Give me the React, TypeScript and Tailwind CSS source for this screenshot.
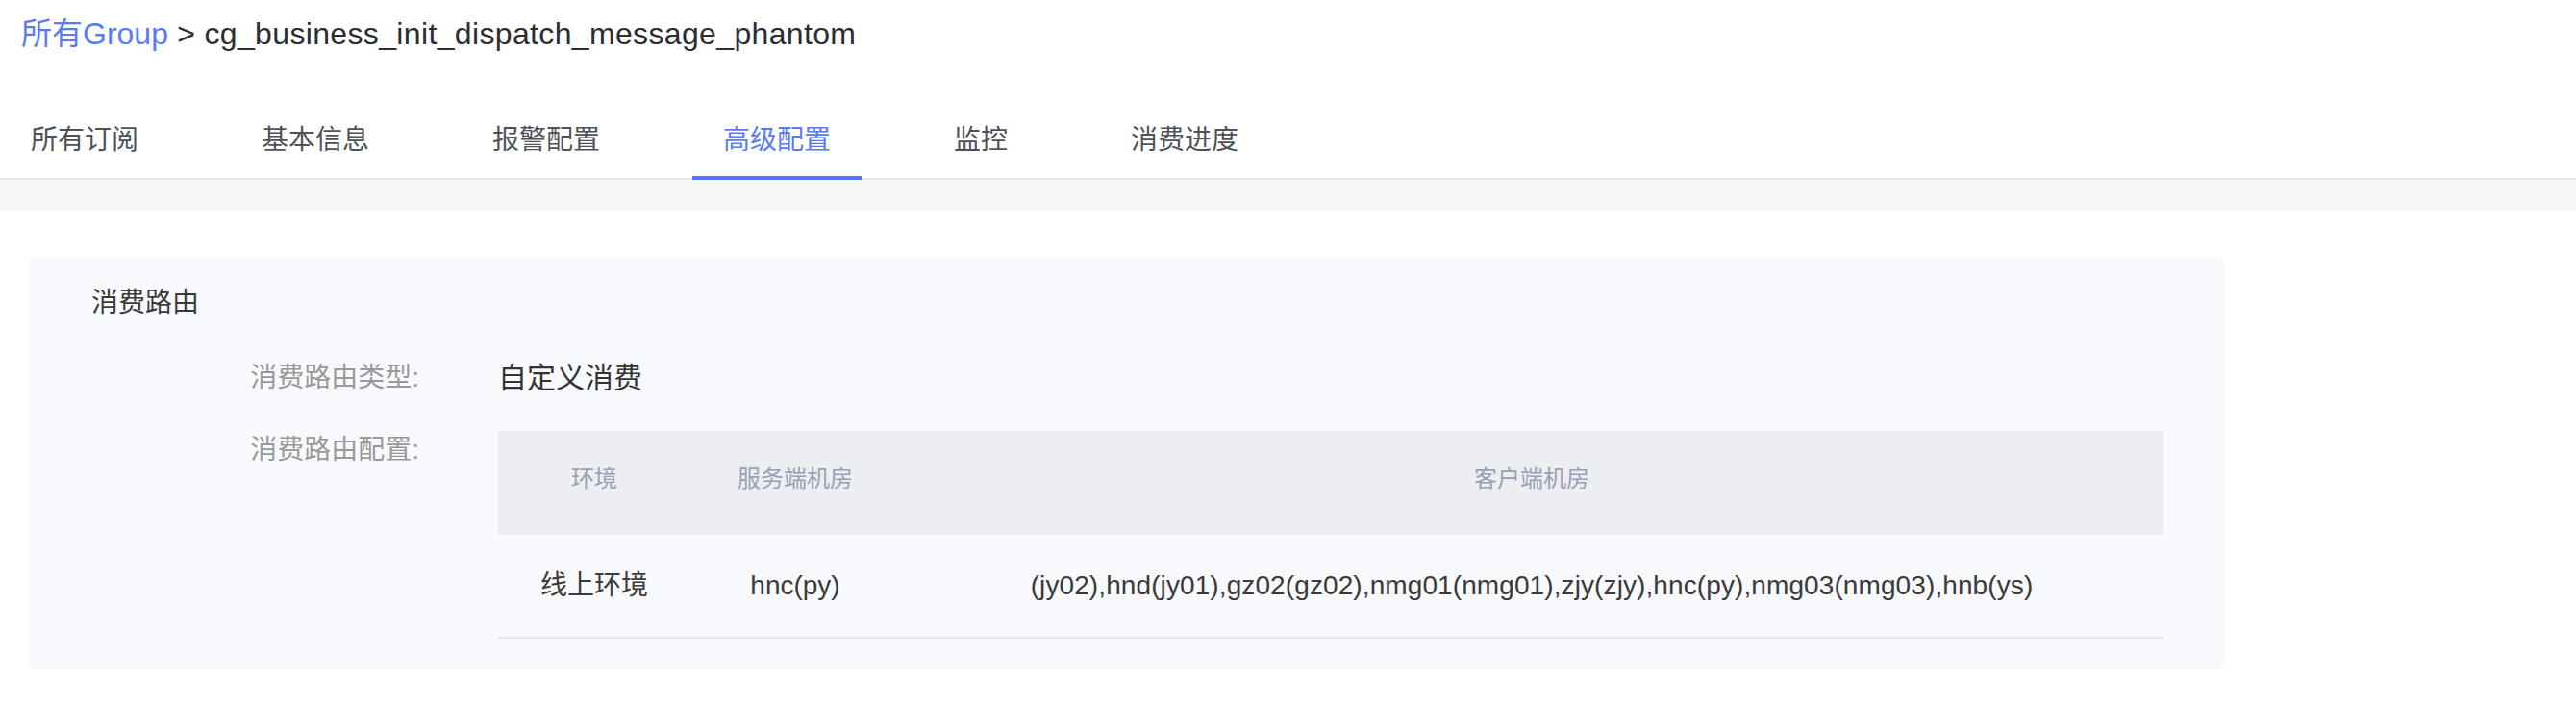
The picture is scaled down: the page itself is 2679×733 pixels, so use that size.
import React from 'react';

const tabs = ['所有订阅', '基本信息', '报警配置', '高级配置', '监控', '消费进度'];

const routes = [
  {
    env: '线上环境',
    server: 'hnc(py)',
    client: '(jy02),hnd(jy01),gz02(gz02),nmg01(nmg01),zjy(zjy),hnc(py),nmg03(nmg03),hnb(ys)',
  },
];

const App: React.FC = () => {
  const active = '高级配置';

  return (
    <div className="min-h-screen w-full bg-white font-['Liberation_Sans','Noto_Sans_CJK_SC',sans-serif]">
      {/* breadcrumb */}
      <div className="pt-[13px] pl-[22px] text-[32px] leading-[44px] whitespace-nowrap">
        <span className="text-[#5a7bf6]">所有Group</span>
        <span className="text-[#2b2d33] tracking-[0.35px]"> &gt; cg_business_init_dispatch_message_phantom</span>
      </div>

      {/* tabs */}
      <div className="flex gap-[64px] border-b-2 border-[#e8e9ed]">
        {tabs.map((tab) => (
          <div
            key={tab}
            className={`relative px-[32px] pt-[69px] pb-[19px] text-[28px] leading-[40px] ${
              tab === active ? 'text-[#5a7bf6]' : 'text-[#4f5158]'
            }`}
          >
            {tab}
            {tab === active && (
              <div className="absolute left-0 right-0 bottom-[-2px] h-[4px] bg-[#5275f5]" />
            )}
          </div>
        ))}
      </div>

      <div className="h-[32px] bg-[#f5f6f8]" />

      <div className="pt-[48px] pl-[29px]">
        <div className="w-[2285px] rounded-[8px] bg-[#f8f9fc] pt-[28px] pb-[32px] pl-[66px] pr-[64px]">
          <div className="text-[28px] leading-[40px] text-[#3a3a3a]">消费路由</div>

          <div className="mt-[38px] flex">
            <div className="w-[341px] text-right text-[28px] leading-[40px] text-[#999999]">消费路由类型:</div>
            <div className="ml-[82px] text-[30px] leading-[40px] text-[#333333]">自定义消费</div>
          </div>

          <div className="mt-[35px] flex">
            <div className="w-[341px] text-right text-[28px] leading-[40px] text-[#999999]">消费路由配置:</div>
            <div className="ml-[82px] flex-1">
              <div className="flex h-[108px] items-center bg-[#edeef2] pb-[9px] text-[24px] text-[#9aa0b4]">
                <div className="w-[200px] text-center">环境</div>
                <div className="w-[218px] text-center">服务端机房</div>
                <div className="flex-1 text-center">客户端机房</div>
              </div>
              {routes.map((r) => (
                <div
                  key={r.env}
                  className="flex h-[108px] items-center border-b-2 border-[#e6e7eb] text-[28px] text-[#3a3a3a]"
                >
                  <div className="w-[200px] text-center">{r.env}</div>
                  <div className="w-[218px] text-center">{r.server}</div>
                  <div className="flex-1 text-center whitespace-nowrap tracking-[0.1px]">{r.client}</div>
                </div>
              ))}
            </div>
          </div>
        </div>
      </div>
    </div>
  );
};

export default App;
